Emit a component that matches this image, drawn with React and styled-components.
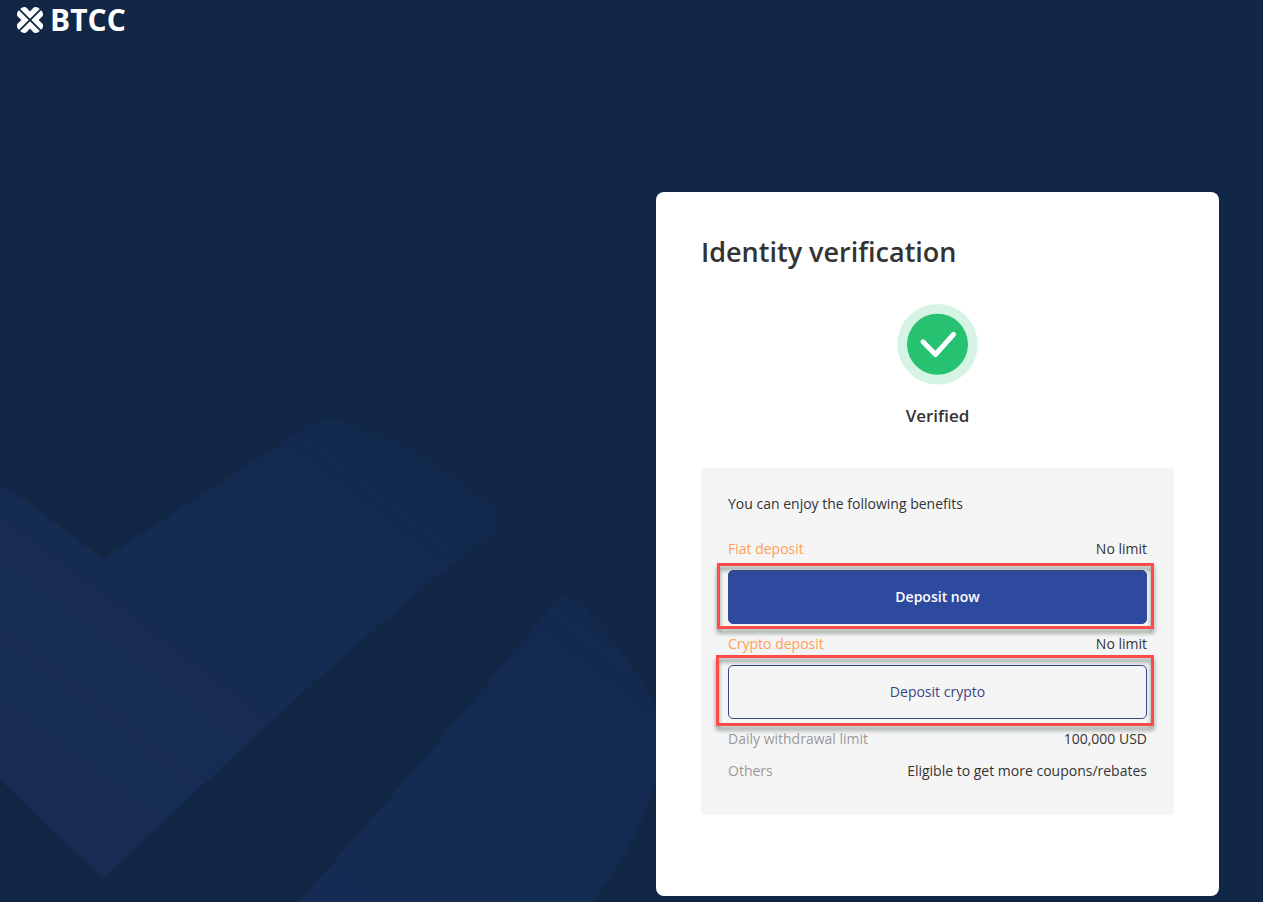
import React from 'react';
import styled, { createGlobalStyle } from 'styled-components';

const GlobalStyle = createGlobalStyle`
  *, *::before, *::after { box-sizing: border-box; }
  body {
    margin: 0;
    background: #122746;
    color: #333;
    font: 400 14px/22px 'Open Sans', 'Noto Sans', sans-serif;
  }
`;

const Page = styled.div`
  position: relative;
  display: flex;
  flex-direction: column;
  min-height: 100vh;
  overflow: hidden;
`;

const Backdrop = styled.svg`
  position: absolute;
  left: 0;
  bottom: 0;
  width: 700px;
  height: 502px;
`;

const Header = styled.header`
  display: flex;
  height: 40px;
  padding: 0 16px;
`;

const Brand = styled.a`
  display: flex;
  align-items: center;
  gap: 6px;
  color: #fff;
  font: 700 30px/40px 'Open Sans', sans-serif;
  text-decoration: none;
`;

const Main = styled.main`
  position: relative;
  display: flex;
  justify-content: flex-end;
  padding: 152px 44px 6px 16px;
`;

const Card = styled.section`
  width: 100%;
  max-width: 563px;
  padding: 40px 45px 81px;
  border-radius: 8px;
  background: #fff;
`;

const Title = styled.h1`
  margin: 0 0 32px;
  font-size: 27px;
  font-weight: 600;
  line-height: 40px;
`;

const Status = styled.div`
  display: flex;
  flex-direction: column;
  align-items: center;
  gap: 20px;
  margin-bottom: 40px;
  font-size: 17px;
  font-weight: 600;
  line-height: 24px;
`;

const Benefits = styled.div`
  padding: 25px 27px 33px;
  border-radius: 4px;
  background: #f5f5f5;
`;

const Intro = styled.p`
  margin: 0 0 23px;
`;

const Row = styled.div`
  display: flex;
  justify-content: space-between;
  gap: 16px;
`;

const Label = styled.span`
  color: ${({ $accent }) => ($accent ? '#ff9f55' : '#999')};
`;

const Spaced = styled.div`
  margin-bottom: 10px;
`;

const Highlight = styled.div`
  position: relative;
  margin: 10px 0 9px;

  &::after {
    content: '';
    position: absolute;
    inset: ${({ $inset }) => $inset};
    border: 3px solid #ff4a47;
    filter: drop-shadow(0 4px 2px rgba(55, 75, 60, 0.6));
    pointer-events: none;
  }
`;

const Button = styled.button`
  display: block;
  width: 100%;
  height: 54px;
  border: 1px solid ${({ $primary }) => ($primary ? '#2e4a9e' : '#3b4687')};
  border-radius: 5px;
  background: ${({ $primary }) => ($primary ? '#2e4a9e' : 'transparent')};
  color: ${({ $primary }) => ($primary ? '#fff' : '#3b4687')};
  font: inherit;
  font-weight: ${({ $primary }) => ($primary ? 600 : 400)};
  cursor: pointer;
`;

const LogoMark = () => (
  <svg width="28" height="28" viewBox="0 0 28 28" fill="#fff" aria-hidden="true">
    {[0, 90, 180, 270].map((angle) => (
      <path
        key={angle}
        transform={`rotate(${angle} 14 14)`}
        d="M4.200 2.900 Q6 .8 8.600 .9 Q9.800 1 10.800 2 L14 5.400 L17.200 2 Q18.200 1 19.400 .9 Q22 .8 23.800 2.900 L14 12.700 Z"
      />
    ))}
  </svg>
);

const VerifiedIcon = () => (
  <svg width="81" height="80" viewBox="0 0 81 80" overflow="visible" aria-hidden="true">
    <circle cx="40.500" cy="40.300" r="40.300" fill="#d5f4e4" />
    <circle cx="40.500" cy="40.300" r="30.500" fill="#26c272" />
    <path d="M26 37.800 L38.500 50.500 L56.500 30.300" fill="none" stroke="#fff" strokeWidth="5" strokeLinecap="round" strokeLinejoin="round" />
  </svg>
);

const BackdropArt = () => (
  <Backdrop viewBox="0 400 700 502" aria-hidden="true">
    <defs>
      <linearGradient id="bands" gradientUnits="userSpaceOnUse" x1="80" y1="860" x2="400" y2="440">
        <stop offset="0" stopColor="#192b54" />
        <stop offset=".14" stopColor="#182b53" />
        <stop offset=".19" stopColor="#142d53" />
        <stop offset=".25" stopColor="#172b53" />
        <stop offset=".32" stopColor="#142d53" />
        <stop offset=".37" stopColor="#172b53" />
        <stop offset=".47" stopColor="#162b52" />
        <stop offset=".54" stopColor="#132c51" />
        <stop offset=".7" stopColor="#122b50" />
        <stop offset=".76" stopColor="#142a50" />
        <stop offset=".88" stopColor="#14294f" />
        <stop offset=".94" stopColor="#112a4d" />
        <stop offset="1" stopColor="#12284c" />
      </linearGradient>
      <linearGradient id="bandsRight" gradientUnits="userSpaceOnUse" x1="400" y1="930" x2="640" y2="620">
        <stop offset="0" stopColor="#162b53" />
        <stop offset=".2" stopColor="#162b52" />
        <stop offset=".28" stopColor="#132c51" />
        <stop offset=".56" stopColor="#122b50" />
        <stop offset=".64" stopColor="#142a50" />
        <stop offset=".85" stopColor="#14294f" />
        <stop offset="1" stopColor="#112a4c" />
      </linearGradient>
    </defs>
    <path fill="url(#bands)" d="M0 487 Q12 491 20 497 L103 559 L305 428 Q331 412 356 426 Q428 452 484 500 Q510 518 492 532 L429 583 L349 651 L303 692 L252 739 L103 878 L0 780 Z" />
    <path fill="url(#bandsRight)" d="M299 902 L421 763 L476 697 L555 602 Q568 590 580 604 Q636 660 660 717 L660 778 L652 793 Q632 852 592 902 Z" />
  </Backdrop>
);

export default function App() {
  return (
    <Page>
      <GlobalStyle />
      <BackdropArt />
      <Header>
        <Brand href="#">
          <LogoMark />
          <span>BTCC</span>
        </Brand>
      </Header>
      <Main>
        <Card>
          <Title>Identity verification</Title>
          <Status>
            <VerifiedIcon />
            <span>Verified</span>
          </Status>
          <Benefits>
            <Intro>You can enjoy the following benefits</Intro>
            <Row>
              <Label $accent>Fiat deposit</Label>
              <span>No limit</span>
            </Row>
            <Highlight $inset="-7px -7px -5px -11px">
              <Button type="button" $primary>Deposit now</Button>
            </Highlight>
            <Row>
              <Label $accent>Crypto deposit</Label>
              <span>No limit</span>
            </Row>
            <Highlight $inset="-10px -7px -7px -12px">
              <Button type="button">Deposit crypto</Button>
            </Highlight>
            <Spaced>
              <Row>
                <Label>Daily withdrawal limit</Label>
                <span>100,000 USD</span>
              </Row>
            </Spaced>
            <Row>
              <Label>Others</Label>
              <span>Eligible to get more coupons/rebates</span>
            </Row>
          </Benefits>
        </Card>
      </Main>
    </Page>
  );
}
